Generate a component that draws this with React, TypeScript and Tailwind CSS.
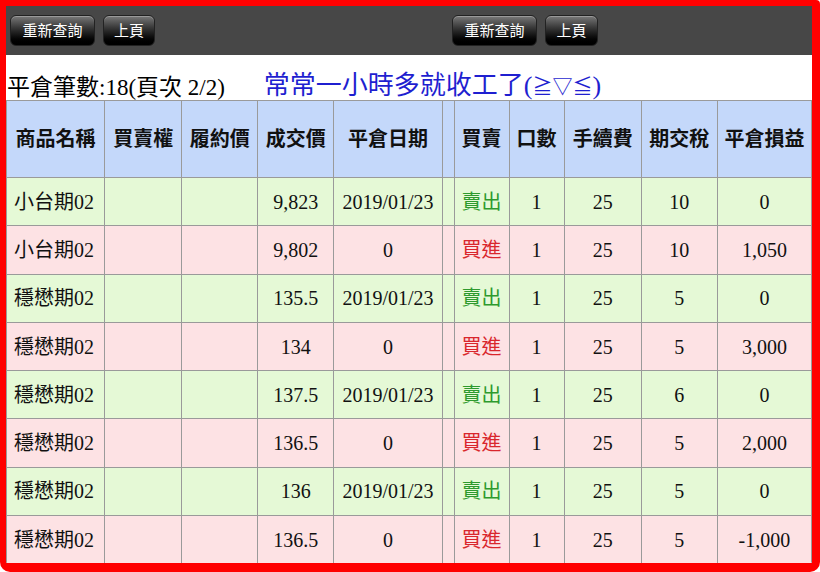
const font = { fontFamily: '"Liberation Serif", "Noto Sans CJK TC", serif' }

type Row = {
  name: string
  price: string
  date: string
  side: '賣出' | '買進'
  qty: string
  fee: string
  tax: string
  pl: string
}

const rows: Row[] = [
  { name: '小台期02', price: '9,823', date: '2019/01/23', side: '賣出', qty: '1', fee: '25', tax: '10', pl: '0' },
  { name: '小台期02', price: '9,802', date: '0', side: '買進', qty: '1', fee: '25', tax: '10', pl: '1,050' },
  { name: '穩懋期02', price: '135.5', date: '2019/01/23', side: '賣出', qty: '1', fee: '25', tax: '5', pl: '0' },
  { name: '穩懋期02', price: '134', date: '0', side: '買進', qty: '1', fee: '25', tax: '5', pl: '3,000' },
  { name: '穩懋期02', price: '137.5', date: '2019/01/23', side: '賣出', qty: '1', fee: '25', tax: '6', pl: '0' },
  { name: '穩懋期02', price: '136.5', date: '0', side: '買進', qty: '1', fee: '25', tax: '5', pl: '2,000' },
  { name: '穩懋期02', price: '136', date: '2019/01/23', side: '賣出', qty: '1', fee: '25', tax: '5', pl: '0' },
  { name: '穩懋期02', price: '136.5', date: '0', side: '買進', qty: '1', fee: '25', tax: '5', pl: '-1,000' },
]

const widths = [98, 77, 76, 76, 108, 12, 55, 55, 77, 76, 94]
const headers = ['商品名稱', '買賣權', '履約價', '成交價', '平倉日期', '', '買賣', '口數', '手續費', '期交稅', '平倉損益']

function Btn({ label, w }: { label: string; w: string }) {
  return (
    <button
      className={`${w} h-[31px] rounded-[6px] border border-[#222] bg-gradient-to-b from-[#7a7a7a] via-[#2a2a2a] to-[#000] text-[15px] text-white shadow-[inset_0_1px_0_rgba(255,255,255,0.25)]`}
      style={{ fontFamily: '"Noto Sans CJK TC", sans-serif' }}
    >
      {label}
    </button>
  )
}

export default function App() {
  return (
    <div
      className="box-border h-[572px] w-[820px] overflow-hidden rounded-b-[10px] rounded-tr-[4px] border-b-[9px] border-l-[6px] border-r-[8px] border-t-[6px] border-[#ff0000] bg-white"
      style={font}
    >
      <div className="flex h-[49px] items-center bg-[#474747] pl-[4px]">
        <div className="flex gap-[8px]">
          <Btn label="重新查詢" w="w-[85px]" />
          <Btn label="上頁" w="w-[52px]" />
        </div>
        <div className="ml-[297px] flex gap-[8px]">
          <Btn label="重新查詢" w="w-[85px]" />
          <Btn label="上頁" w="w-[53px]" />
        </div>
      </div>

      <div className="flex h-[45px] items-end pb-[1px]">
        <span className="ml-[1px] text-[23px] leading-none text-black">平倉筆數:18(頁次 2/2)</span>
        <span className="ml-[39px] text-[26px] leading-none text-[#1f1fd0]">
          常常一小時多就收工了(<span className="text-[20px]">≧▽≦</span>)
        </span>
      </div>

      <table className="table-fixed border-collapse text-[20px]" style={{ width: 806 }}>
        <colgroup>
          {widths.map((w, i) => (
            <col key={i} style={{ width: w }} />
          ))}
        </colgroup>
        <thead>
          <tr className="h-[77px] bg-[#c4d8fa]">
            {headers.map((h, i) => (
              <th key={i} className="border border-[#9a9a9a] p-0 text-center text-[20px] font-bold text-[#111]">
                {h}
              </th>
            ))}
          </tr>
        </thead>
        <tbody>
          {rows.map((r, i) => {
            const sell = r.side === '賣出'
            return (
              <tr key={i} className={`h-[48.3px] ${sell ? 'bg-[#e5f9d6]' : 'bg-[#fde2e4]'}`}>
                <td className="border border-[#9a9a9a] px-[7px] text-left text-[#111]">{r.name}</td>
                <td className="border border-[#9a9a9a]"></td>
                <td className="border border-[#9a9a9a]"></td>
                <td className="border border-[#9a9a9a] text-center text-[#111]">{r.price}</td>
                <td className="border border-[#9a9a9a] text-center text-[#111]">{r.date}</td>
                <td className="border border-[#9a9a9a]"></td>
                <td className={`border border-[#9a9a9a] text-center ${sell ? 'text-[#2e9a2e]' : 'text-[#d9262c]'}`}>{r.side}</td>
                <td className="border border-[#9a9a9a] text-center text-[#111]">{r.qty}</td>
                <td className="border border-[#9a9a9a] text-center text-[#111]">{r.fee}</td>
                <td className="border border-[#9a9a9a] text-center text-[#111]">{r.tax}</td>
                <td className="border border-[#9a9a9a] text-center text-[#111]">{r.pl}</td>
              </tr>
            )
          })}
        </tbody>
      </table>
    </div>
  )
}
